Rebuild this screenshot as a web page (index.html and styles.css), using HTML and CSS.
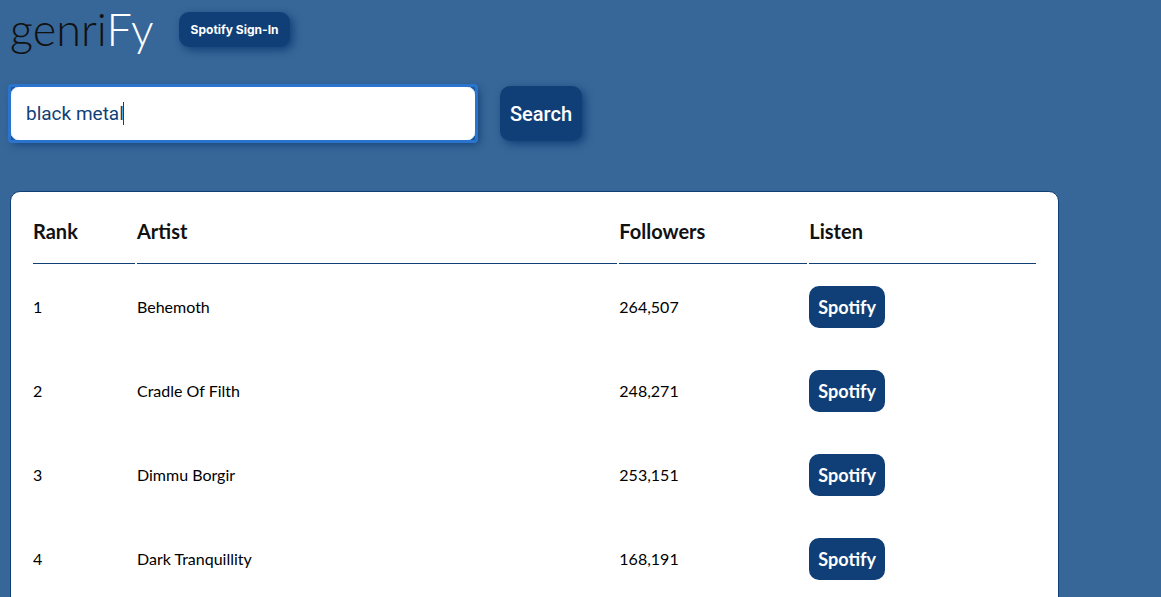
FILE: index.html
```html
<!DOCTYPE html>
<html lang="en">
<head>
<meta charset="utf-8">
<title>genriFy</title>
<link rel="stylesheet" href="styles.css">
</head>
<body>
<header class="top">
  <h1 class="logo">genri<span class="logo-accent">Fy</span></h1>
  <button class="btn sign-in" type="button">Spotify Sign-In</button>
</header>
<form class="search">
  <div class="field">
    <input class="search-input" type="text" aria-label="Genre" value="black metal">
    <span class="caret"></span>
  </div>
  <button class="btn search-btn" type="button">Search</button>
</form>
<main class="card">
  <table class="results">
    <colgroup><col class="col-rank"><col class="col-artist"><col class="col-followers"><col class="col-listen"></colgroup>
    <thead>
      <tr><th>Rank</th><th>Artist</th><th>Followers</th><th>Listen</th></tr>
    </thead>
    <tbody>
      <tr><td>1</td><td>Behemoth</td><td>264,507</td><td><a class="listen" href="#">Spotify</a></td></tr>
      <tr><td>2</td><td>Cradle Of Filth</td><td>248,271</td><td><a class="listen" href="#">Spotify</a></td></tr>
      <tr><td>3</td><td>Dimmu Borgir</td><td>253,151</td><td><a class="listen" href="#">Spotify</a></td></tr>
      <tr><td>4</td><td>Dark Tranquillity</td><td>168,191</td><td><a class="listen" href="#">Spotify</a></td></tr>
    </tbody>
  </table>
</main>
</body>
</html>
```
FILE: styles.css
```css
* { box-sizing: border-box; }
html { background: #376798; scrollbar-width: none; }
body {
  margin: 0;
  padding: 0 10px;
  color: #111;
  font-family: Lato, sans-serif;
  font-size: 16px;
}
.top {
  display: flex;
  align-items: center;
  gap: 25px;
  height: 59px;
}
.logo {
  margin: 0;
  font-size: 45px;
  font-weight: 300;
  line-height: 59px;
}
.logo-accent { color: #fff; }
.btn {
  border: 0;
  border-radius: 10px;
  background: #103f77;
  color: #fff;
  box-shadow: 3px 3px 8px #103f77;
}
.sign-in {
  height: 35px;
  padding: 0 12px;
  font: 700 12px Inter, sans-serif;
}
.search {
  display: flex;
  gap: 24px;
  margin-top: 27px;
}
.field {
  position: relative;
  width: 41%;
  max-width: 466px;
  height: 55px;
  border-radius: 2px;
  background: #1a569f;
  outline: 3px solid #2b74cd;
  outline-offset: -1px;
  box-shadow: 3px 3px 8px #103f77;
}
.search-input {
  display: block;
  width: 100%;
  height: 55px;
  padding: 0 15px;
  border: 1px solid #c4dcf8;
  border-radius: 10px;
  outline: 0;
  background: #fff;
  color: #103f77;
  font: 400 19px Roboto, sans-serif;
}
.caret {
  position: absolute;
  top: 16px;
  left: 113px;
  width: 1px;
  height: 23px;
  background: #103f77;
}
.search-btn {
  height: 55px;
  padding: 0 10px;
  font: 500 20px Roboto, sans-serif;
}
.card {
  width: 91.9%;
  margin-top: 50px;
  padding: 6px 20px 20px;
  border: 1px solid #103f77;
  border-radius: 10px;
  background: #fff;
}
.results {
  width: 100%;
  table-layout: fixed;
  border-spacing: 2px;
}
.col-rank { width: 102px; }
.col-artist { width: 48.2%; }
.col-followers { width: 188px; }
th, td { text-align: left; }
th {
  padding: 20px 0;
  border-bottom: 1px solid #103f77;
  font-size: 20px;
  line-height: 23px;
}
td { padding: 20px 0; line-height: 24px; color: #000; }
.listen {
  display: block;
  width: max-content;
  padding: 9px;
  border-radius: 10px;
  background: #103f77;
  color: #fff;
  font-size: 18px;
  font-weight: 700;
  text-decoration: none;
}
```
